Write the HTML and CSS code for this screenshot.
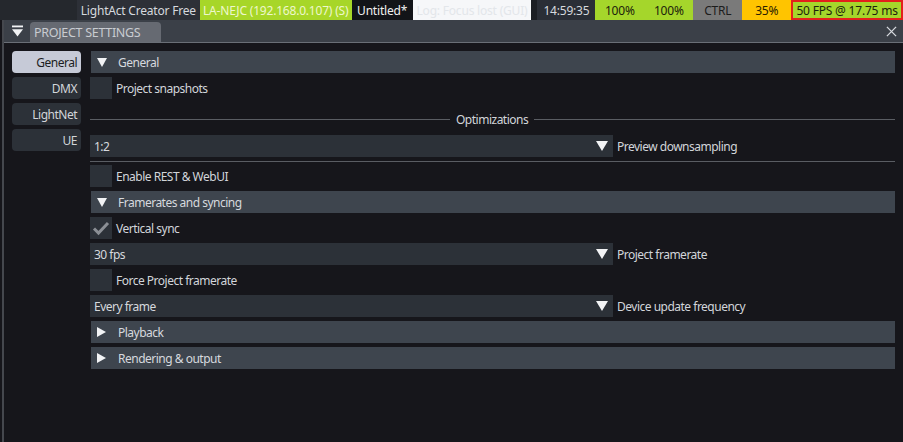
FILE: index.html
```html
<!DOCTYPE html>
<html lang="en">
<head>
    <meta charset="UTF-8">
    <title>LightAct - Project settings</title>
    <link rel="stylesheet" href="styles.css">
</head>
<body>
    <div class="status-bar">
        <div class="seg seg-empty"></div>
        <div class="seg seg-app">LightAct Creator Free</div>
        <div class="seg seg-host">LA-NEJC (192.168.0.107) (S)</div>
        <div class="seg seg-file">Untitled*</div>
        <div class="seg seg-log">Log: Focus lost (GUI)</div>
        <div class="seg seg-gap"></div>
        <div class="seg seg-time">14:59:35</div>
        <div class="seg seg-ok">100%</div>
        <div class="seg seg-ok">100%</div>
        <div class="seg seg-ctrl">CTRL</div>
        <div class="seg seg-warn">35%</div>
        <div class="seg seg-fps">50 FPS @ 17.75 ms</div>
    </div>

    <div class="window">
        <div class="title-bar">
            <svg class="collapse-icon" viewBox="0 0 12 12"><rect x="0" y="0" width="12" height="2"/><path d="M0 4h12L6 12z"/></svg>
            <div class="tab">PROJECT SETTINGS</div>
            <svg class="close-icon" viewBox="0 0 12 12"><path d="M1 1L11 11M11 1L1 11"/></svg>
        </div>

        <div class="window-body">
            <div class="sidebar">
                <div class="side-tab active">General</div>
                <div class="side-tab">DMX</div>
                <div class="side-tab">LightNet</div>
                <div class="side-tab">UE</div>
            </div>

            <div class="settings">
                <div class="section-head"><span class="tri down"></span>General</div>
                <div class="check-row"><span class="checkbox"></span>Project snapshots</div>

                <div class="separator"><span>Optimizations</span></div>
                <div class="combo-row">
                    <div class="combo">1:2<span class="combo-arrow"></span></div>
                    <span class="combo-label">Preview downsampling</span>
                </div>
                <div class="divider"></div>
                <div class="check-row"><span class="checkbox"></span>Enable REST &amp; WebUI</div>

                <div class="section-head"><span class="tri down"></span>Framerates and syncing</div>
                <div class="check-row">
                    <span class="checkbox"><svg viewBox="0 0 22 22"><path d="M4 11.5l4.5 4.5L18 6"/></svg></span>Vertical sync
                </div>
                <div class="combo-row">
                    <div class="combo">30 fps<span class="combo-arrow"></span></div>
                    <span class="combo-label">Project framerate</span>
                </div>
                <div class="check-row"><span class="checkbox"></span>Force Project framerate</div>
                <div class="combo-row">
                    <div class="combo">Every frame<span class="combo-arrow"></span></div>
                    <span class="combo-label">Device update frequency</span>
                </div>

                <div class="section-head"><span class="tri right"></span>Playback</div>
                <div class="section-head"><span class="tri right"></span>Rendering &amp; output</div>
            </div>
        </div>
    </div>
</body>
</html>
```

FILE: styles.css
```css
body {
    margin: 0;
    background-color: #16161b;
    color: #d2d5da;
    font-family: "Noto Sans", "Open Sans", sans-serif;
    font-size: 12px;
    letter-spacing: -0.5px;
    width: 903px;
    height: 442px;
    overflow: hidden;
}
.status-bar {
    display: flex;
    height: 20px;
    background-color: #25282d;
    font-size: 12px;
    letter-spacing: -0.2px;
}
.seg {
    display: flex;
    align-items: center;
    justify-content: center;
    white-space: nowrap;
    box-sizing: border-box;
}
.seg-empty { width: 77px; }
.seg-app { width: 123px; background-color: #2d3037; color: #d6d9de; }
.seg-host { width: 152px; background-color: #a7d628; color: #eef7cc; }
.seg-file { width: 61px; background-color: #121418; color: #f0f0f0; }
.seg-log { width: 119px; background-color: #f6f7f9; color: #e3e6ea; }
.seg-gap { width: 6px; background-color: #1c1f24; }
.seg-time { width: 58px; background-color: #2a2e36; color: #d6d9de; }
.seg-ok { width: 49px; background-color: #a5d62b; color: #1c230c; }
.seg-ctrl { width: 49px; background-color: #7a7a7a; color: #1c1c1c; }
.seg-warn { width: 49px; background-color: #ffc400; color: #2a2000; }
.seg-fps { width: 112px; background-color: #a5d62b; color: #1c230c; border: 2px solid #e3201b; }

.window {
    margin-left: 2px;
    border-left: 2px solid #45484e;
    height: 422px;
}
.title-bar {
    display: flex;
    align-items: flex-end;
    height: 22px;
    background-color: #3b4048;
    border-bottom: 1px solid #6a6f77;
}
.collapse-icon {
    width: 11px;
    height: 12px;
    fill: #f2f3f5;
    margin: 0 7px 5px 8px;
}
.tab {
    width: 131px;
    height: 20px;
    box-sizing: border-box;
    padding: 2px 0 0 4px;
    background-color: #666a72;
    color: #c9ccd1;
    font-size: 12.5px;
    letter-spacing: -0.3px;
    border-radius: 4px 4px 0 0;
}
.close-icon {
    width: 11px;
    height: 11px;
    fill: none;
    stroke: #d8dbe0;
    stroke-width: 1.4;
    margin: 0 6px 5px auto;
}

.window-body {
    display: flex;
    gap: 9px;
    padding: 8px 0 0 8px;
}
.sidebar {
    display: flex;
    flex-direction: column;
    gap: 4px;
    width: 69px;
}
.side-tab {
    height: 22px;
    box-sizing: border-box;
    padding: 3px 4px 0 0;
    text-align: right;
    background-color: #2c3138;
    border-radius: 4px;
}
.side-tab.active {
    background-color: #c6cad7;
    color: #1b1d22;
}

.settings {
    display: flex;
    flex-direction: column;
    gap: 4px;
    width: 805px;
}
.section-head {
    display: flex;
    align-items: center;
    height: 22px;
    margin-left: 1px;
    background-color: #3e454e;
    color: #d6d9de;
}
.tri {
    width: 0;
    height: 0;
    margin: 0 11px 0 6px;
}
.tri.down {
    border-left: 5px solid transparent;
    border-right: 5px solid transparent;
    border-top: 9px solid #f2f3f5;
}
.tri.right {
    border-top: 5px solid transparent;
    border-bottom: 5px solid transparent;
    border-left: 9px solid #f2f3f5;
    margin-right: 12px;
}
.check-row {
    display: flex;
    align-items: center;
    height: 22px;
}
.checkbox {
    width: 22px;
    height: 22px;
    background-color: #2c3138;
    margin-right: 4px;
}
.checkbox svg {
    width: 22px;
    height: 22px;
    fill: none;
    stroke: #8b8f95;
    stroke-width: 3;
}
.separator {
    display: flex;
    align-items: center;
    gap: 6px;
    height: 28px;
    box-sizing: border-box;
    padding-top: 4px;
}
.separator::before,
.separator::after {
    content: "";
    flex: 1;
    border-top: 1px solid #5a5d63;
}
.separator::before { flex: 0 0 360px; }
.combo-row {
    display: flex;
    align-items: center;
    height: 22px;
}
.combo {
    display: flex;
    align-items: center;
    width: 523px;
    height: 22px;
    box-sizing: border-box;
    padding-left: 4px;
    background-color: #2c3138;
    color: #d6d9de;
}
.combo-arrow {
    margin-left: auto;
    margin-right: 5px;
    border-left: 6px solid transparent;
    border-right: 6px solid transparent;
    border-top: 10px solid #f2f3f5;
}
.combo-label {
    margin-left: 4px;
}
.divider {
    border-top: 1px solid #5a5d63;
    margin-bottom: -1px;
}
```
